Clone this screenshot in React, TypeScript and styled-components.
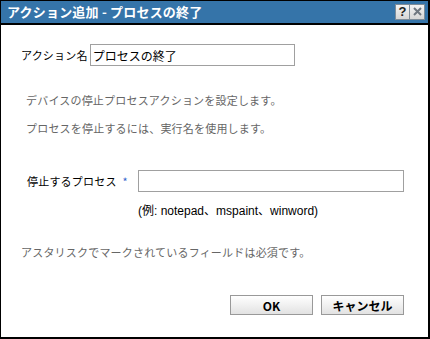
import * as React from "react";
import styled, { createGlobalStyle } from "styled-components";

const GlobalStyle = createGlobalStyle`
	html, body {
		margin: 0;
		padding: 0;
		background: #ffffff;
	}
	body {
		font-family: "Noto Sans CJK JP", "Liberation Sans", sans-serif;
	}
`;

const StyledDialog = styled.div`
	box-sizing: border-box;
	width: 430px;
	height: 339px;
	display: flex;
	flex-direction: column;
	border: 1px solid #000;
	border-right-width: 2px;
	border-bottom-width: 2px;
	background: #fff;
`;

const StyledTitleBar = styled.div`
	box-sizing: border-box;
	height: 24px;
	flex: none;
	display: flex;
	align-items: center;
	justify-content: space-between;
	padding: 0 3px 1px 6px;
	background: #3574a9;
	border-bottom: 2px solid #000;
`;

const StyledTitle = styled.div`
	color: #fff;
	font-size: 13px;
	font-weight: bold;
	letter-spacing: 0.2px;
	white-space: pre;
`;

const StyledTitleButtons = styled.div`
	display: flex;
`;

const StyledTitleButton = styled.div`
	box-sizing: border-box;
	width: 15px;
	height: 16px;
	display: flex;
	align-items: center;
	justify-content: center;
	background: linear-gradient(#f4f4f4, #d6d6d6);
	border: 1px solid #7d8c99;
	color: #222;
	font-family: "Liberation Sans", sans-serif;
	font-size: 13px;
	font-weight: bold;
	& + & {
		border-left: none;
	}
`;

const StyledBody = styled.div`
	flex: 1;
	display: flex;
	flex-direction: column;
	padding: 19px 24px 0 20px;
	font-size: 11px;
	letter-spacing: 0.2px;
	color: #000;
`;

const StyledRow = styled.div<{ $indent?: number; $top?: number }>`
	display: flex;
	align-items: center;
	margin-top: ${p => p.$top ?? 0}px;
	padding-left: ${p => p.$indent ?? 0}px;
`;

const StyledLabel = styled.span<{ $width?: number }>`
	flex: none;
	width: ${p => (p.$width ? `${p.$width}px` : "auto")};
	margin-right: 2px;
	white-space: nowrap;
`;

const StyledAsterisk = styled.span`
	color: #3366cc;
	margin-left: 6px;
`;

const StyledInput = styled.input<{ $width: number }>`
	box-sizing: border-box;
	width: ${p => p.$width}px;
	height: 22px;
	padding: 0 2px;
	border: 1px solid #a0a0a0;
	font-family: inherit;
	font-size: 12px;
	color: #000;
	outline: none;
`;

const StyledNote = styled.p<{ $top: number; $indent?: number }>`
	margin: ${p => p.$top}px 0 0 ${p => p.$indent ?? 0}px;
	color: #666;
	line-height: 14px;
`;

const StyledHint = styled.p`
	margin: 12px 0 0 117px;
	color: #000;
	line-height: 14px;
	font-family: "Liberation Sans", "Noto Sans CJK JP", sans-serif;
	font-size: 12px;
	letter-spacing: 0;
`;

const StyledFooter = styled.div`
	display: flex;
	justify-content: flex-end;
	gap: 8px;
	margin-top: 36px;
`;

const StyledButton = styled.button`
	box-sizing: border-box;
	width: 83px;
	height: 20px;
	padding: 0;
	background: linear-gradient(#ffffff, #e2e2e2);
	border: 1px solid #999;
	font-family: inherit;
	font-size: 12px;
	font-weight: bold;
	color: #000;
`;

const App = () => (
	<>
		<GlobalStyle />
		<StyledDialog>
			<StyledTitleBar>
				<StyledTitle>アクション追加 - プロセスの終了</StyledTitle>
				<StyledTitleButtons>
					<StyledTitleButton>?</StyledTitleButton>
					<StyledTitleButton>
						<svg width="9" height="9" viewBox="0 0 9 9">
							<path d="M1 1L8 8M8 1L1 8" stroke="#6f7780" strokeWidth="2" />
						</svg>
					</StyledTitleButton>
				</StyledTitleButtons>
			</StyledTitleBar>
			<StyledBody>
				<StyledRow>
					<StyledLabel>アクション名</StyledLabel>
					<StyledInput $width={205} defaultValue="プロセスの終了" />
				</StyledRow>
				<StyledNote $top={27} $indent={5}>デバイスの停止プロセスアクションを設定します。</StyledNote>
				<StyledNote $top={14} $indent={5}>プロセスを停止するには、実行名を使用します。</StyledNote>
				<StyledRow $indent={6} $top={35}>
					<StyledLabel $width={109}>
						停止するプロセス<StyledAsterisk>*</StyledAsterisk>
					</StyledLabel>
					<StyledInput $width={266} />
				</StyledRow>
				<StyledHint>(例: notepad、mspaint、winword)</StyledHint>
				<StyledNote $top={27}>アスタリスクでマークされているフィールドは必須です。</StyledNote>
				<StyledFooter>
					<StyledButton>OK</StyledButton>
					<StyledButton>キャンセル</StyledButton>
				</StyledFooter>
			</StyledBody>
		</StyledDialog>
	</>
);

export default App;
